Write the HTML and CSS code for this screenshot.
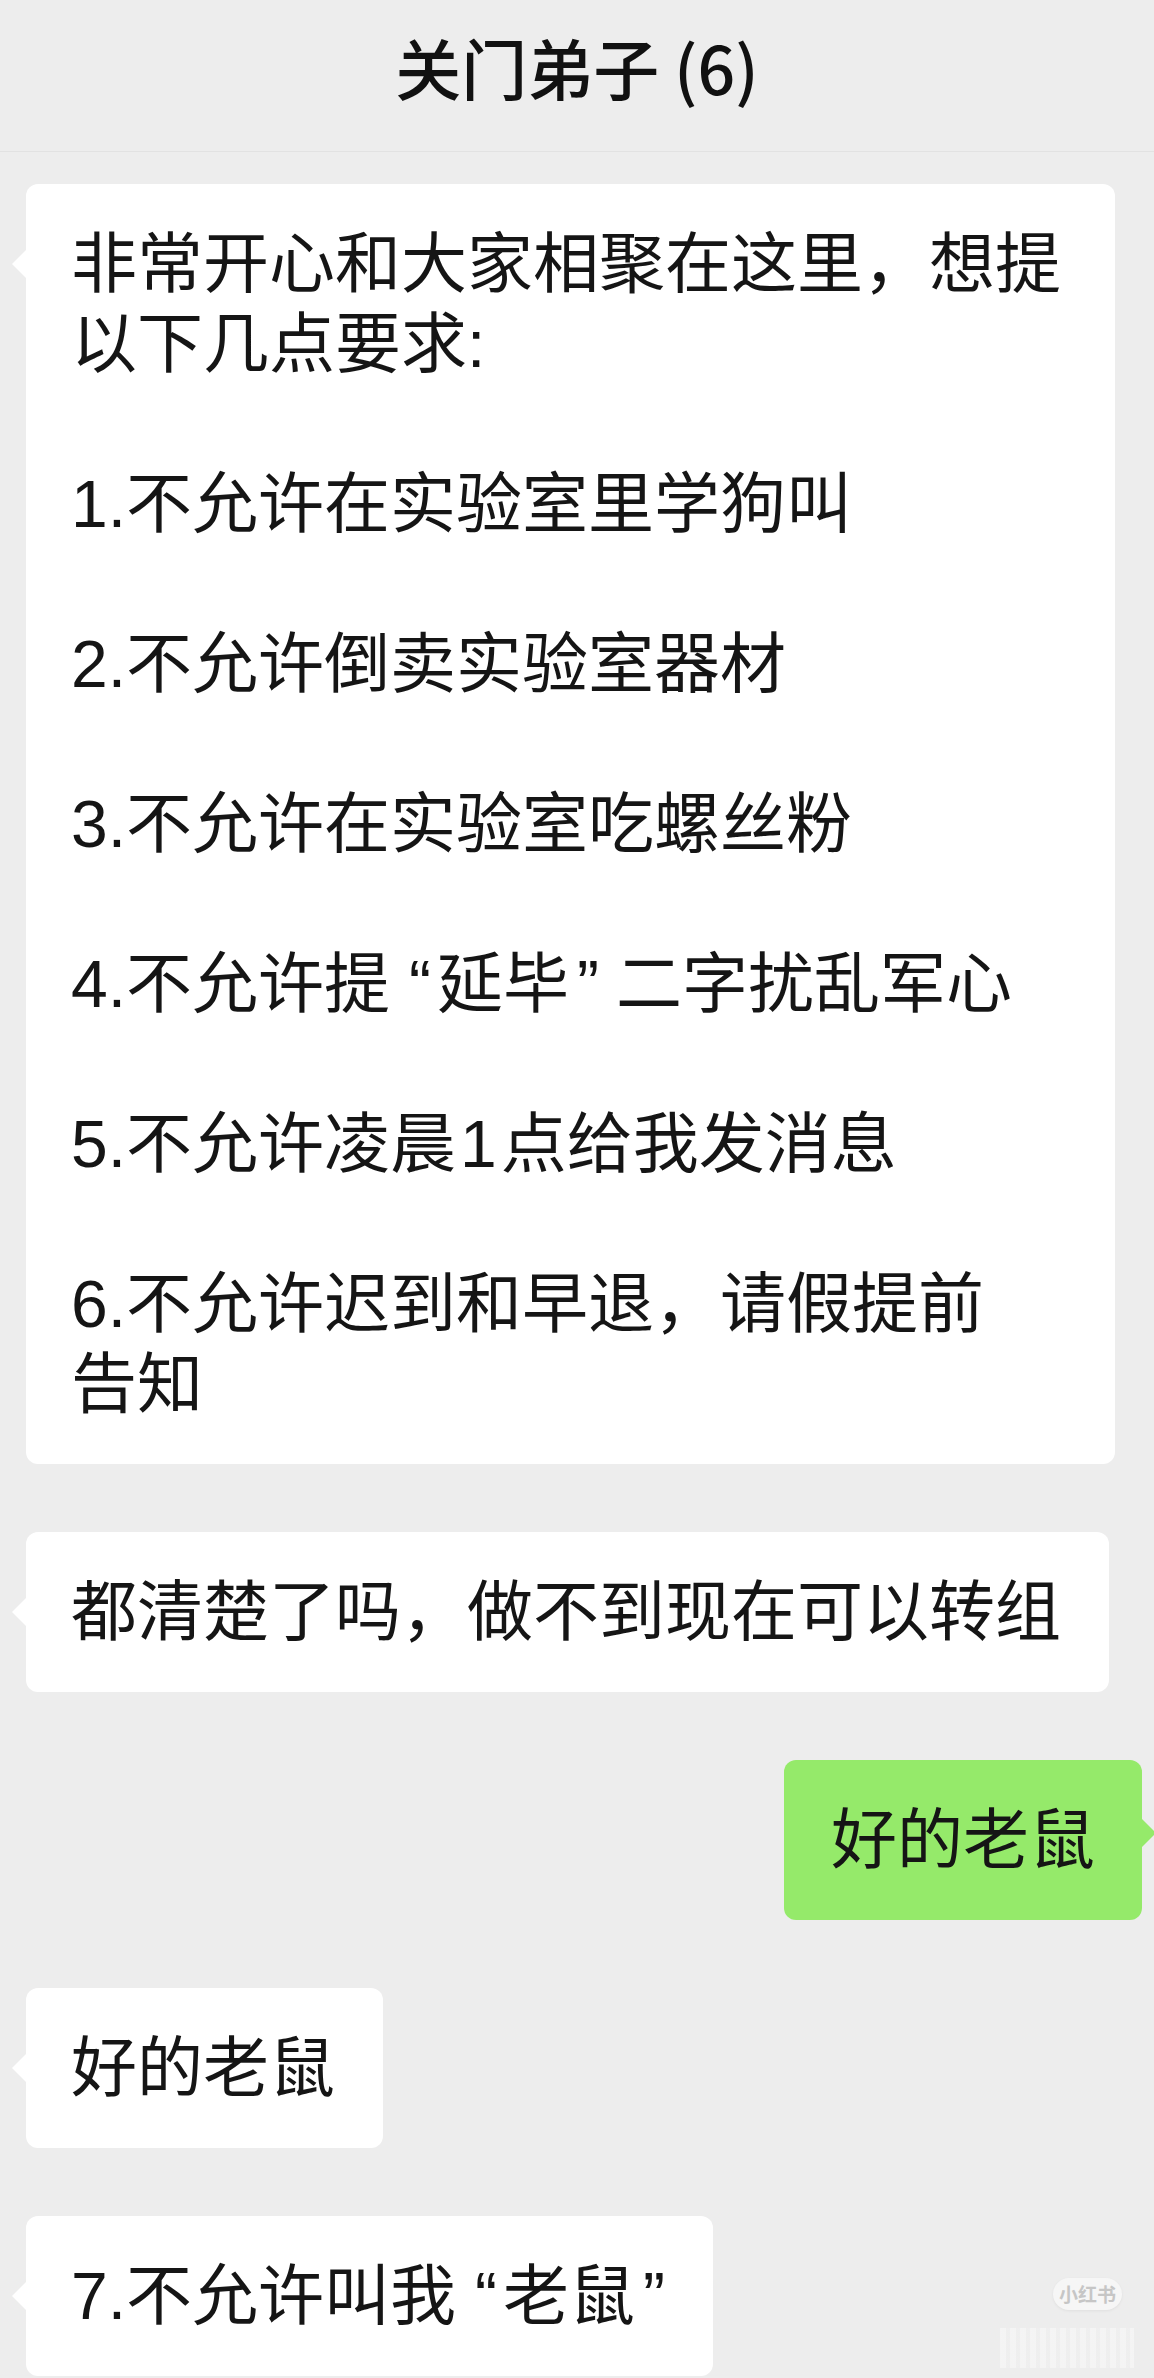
FILE: index.html
```html
<!DOCTYPE html>
<html lang="zh-CN">
<head>
    <meta charset="UTF-8">
    <meta name="viewport" content="width=device-width, initial-scale=1.0">
    <title>关门弟子 (6)</title>
    <link rel="stylesheet" href="styles.css">
</head>
<body>
    <header class="title-bar">
        <h1>关门弟子 (6)</h1>
    </header>
    <main class="chat">
        <div class="msg msg-in">
            <div class="bubble">
                <p>非常开心和大家相聚在这里，想提以下几点要求:</p>
                <p>1.不允许在实验室里学狗叫</p>
                <p>2.不允许倒卖实验室器材</p>
                <p>3.不允许在实验室吃螺丝粉</p>
                <p>4.不允许提<span class="q q-open">“</span>延毕<span class="q q-close">”</span>二字扰乱军心</p>
                <p>5.不允许凌晨<span class="num">1</span>点给我发消息</p>
                <p>6.不允许迟到和早退，请假提前<br>告知</p>
            </div>
        </div>
        <div class="msg msg-in">
            <div class="bubble">
                <p>都清楚了吗，做不到现在可以转组</p>
            </div>
        </div>
        <div class="msg msg-out">
            <div class="bubble bubble-green">
                <p>好的老鼠</p>
            </div>
        </div>
        <div class="msg msg-in">
            <div class="bubble">
                <p>好的老鼠</p>
            </div>
        </div>
        <div class="msg msg-in">
            <div class="bubble">
                <p>7.不允许叫我<span class="q q-open">“</span>老鼠<span class="q q-close q-end">”</span></p>
            </div>
        </div>
    </main>
    <div class="watermark">小红书</div>
    <div class="watermark-strip"></div>
</body>
</html>
```

FILE: styles.css
```css
body {
    margin: 0;
    padding: 0;
    background-color: #ededed;
    color: #151515;
    font-family: "Liberation Sans", "Noto Sans CJK SC", sans-serif;
    position: relative;
    min-height: 2378px;
    overflow: hidden;
}
.title-bar {
    height: 152px;
    box-sizing: border-box;
    padding-bottom: 20px;
    display: flex;
    align-items: center;
    justify-content: center;
    border-bottom: 1px solid #e2e2e2;
}
.title-bar h1 {
    margin: 0;
    font-family: "Noto Sans CJK SC", sans-serif;
    font-size: 66px;
    font-weight: 500;
    line-height: 1;
    color: #111;
}
.chat {
    display: flex;
    flex-direction: column;
    gap: 68px;
    padding: 32px 12px 0 26px;
}
.msg {
    display: flex;
}
.msg-out {
    justify-content: flex-end;
}
.bubble {
    position: relative;
    max-width: 1089px;
    box-sizing: border-box;
    padding: 40px 48px 40px 45px;
    background-color: #fff;
    border-radius: 12px;
    font-size: 66px;
    line-height: 80px;
}
.bubble::before {
    content: "";
    position: absolute;
    top: 66px;
    left: -14px;
    border-style: solid;
    border-width: 14px 14px 14px 0;
    border-color: transparent #fff transparent transparent;
}
.bubble p {
    margin: 0;
}
.bubble p + p {
    margin-top: 80px;
}
.bubble-green {
    background-color: #95ea6a;
    padding: 40px 47px;
}
.bubble-green::before {
    left: auto;
    right: -14px;
    top: 59px;
    border-width: 14px 0 14px 14px;
    border-color: transparent transparent transparent #95ea6a;
}
.q {
    font-family: "Liberation Sans", sans-serif;
}
.q-open {
    margin: 0 6px 0 19px;
}
.q-close {
    margin: 0 17px 0 8px;
}
.q-end {
    margin-right: 0;
}
.num {
    margin: 0 4px;
}
.watermark {
    position: absolute;
    left: 1053px;
    top: 2278px;
    width: 69px;
    height: 32px;
    border-radius: 16px;
    background-color: #f6f6f6;
    box-shadow: 0 1px 3px rgba(0, 0, 0, 0.06);
    color: #c6c6c6;
    font-family: "Noto Sans CJK SC", sans-serif;
    font-size: 19px;
    font-weight: 700;
    line-height: 32px;
    text-align: center;
}
.watermark-strip {
    position: absolute;
    left: 1000px;
    top: 2328px;
    width: 134px;
    height: 40px;
    background: repeating-linear-gradient(90deg, #f6f6f6 0, #f6f6f6 6px, #efefef 6px, #efefef 10px);
    opacity: 0.8;
}
```
